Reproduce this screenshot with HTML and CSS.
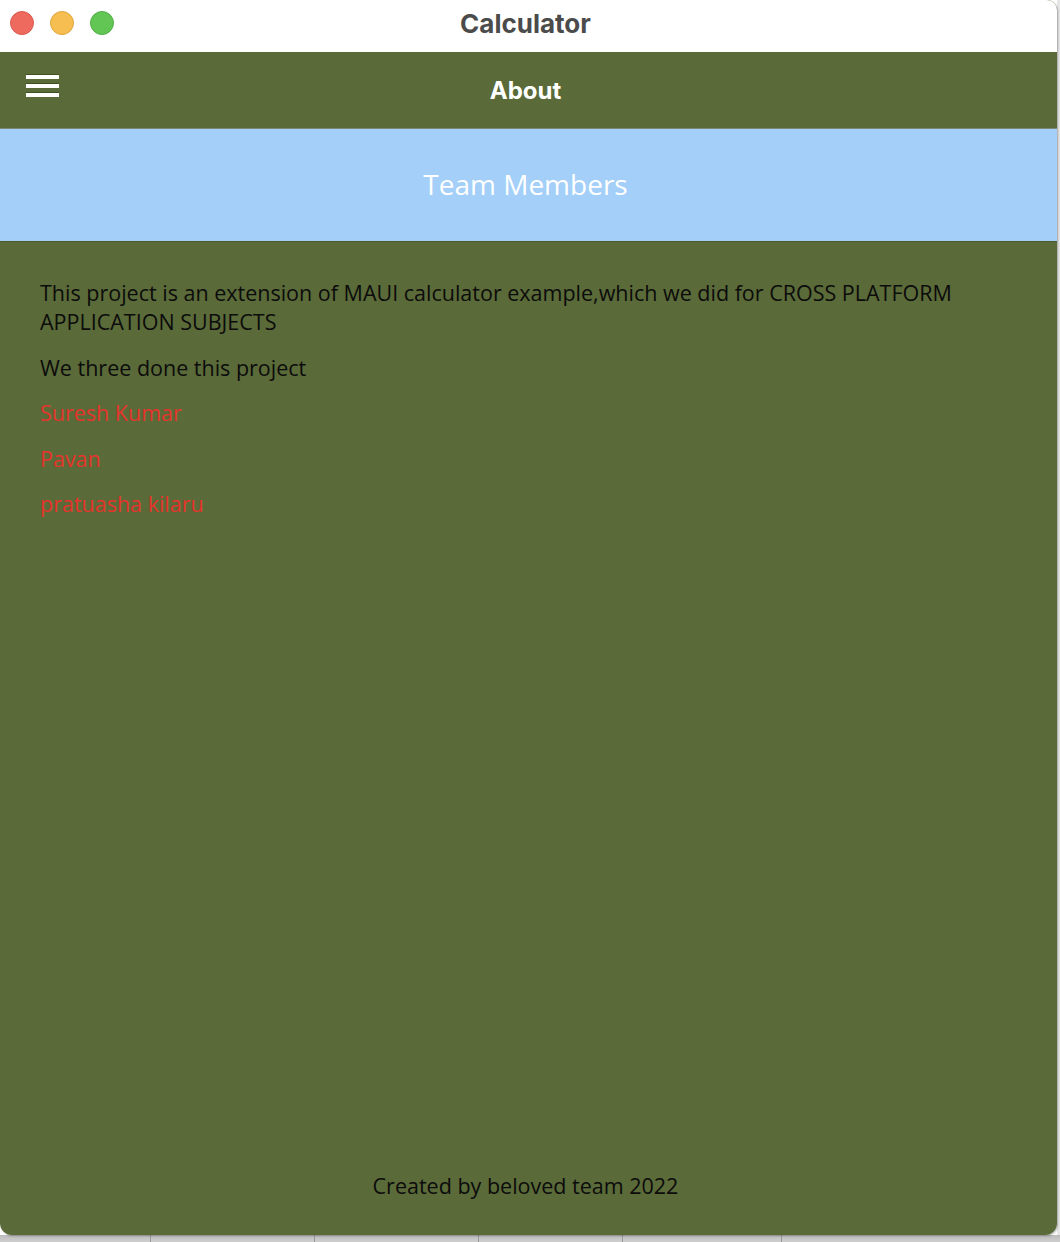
FILE: index.html
```html
<!DOCTYPE html>
<html>
<head>
<meta charset="utf-8">
<link rel="stylesheet" href="styles.css">
</head>
<body>
<div class="desktop">
  <div class="window">
    <div class="titlebar">
      <div class="lights">
        <span class="light red"></span>
        <span class="light yellow"></span>
        <span class="light green"></span>
      </div>
      <div class="title">Calculator</div>
    </div>
    <div class="navbar">
      <div class="burger"><span></span><span></span><span></span></div>
      <div class="navtitle">About</div>
    </div>
    <div class="banner">Team Members</div>
    <div class="content">
      <p class="text">This project is an extension of MAUI calculator example,which we did for CROSS PLATFORM APPLICATION SUBJECTS</p>
      <p class="text">We three done this project</p>
      <p class="text name">Suresh Kumar</p>
      <p class="text name">Pavan</p>
      <p class="text name">pratuasha kilaru</p>
    </div>
    <div class="footer">Created by beloved team 2022</div>
  </div>
  <div class="dock">
    <span class="seg s1"></span><span class="seg s2"></span><span class="seg s3"></span><span class="seg s4"></span><span class="seg s5"></span>
  </div>
</div>
</body>
</html>
```
FILE: styles.css
```css
html, body {
  margin: 0;
  padding: 0;
}
body {
  background: #d0d0d0;
  width: 1060px;
  height: 1242px;
  overflow: hidden;
}
.desktop {
  display: flex;
  flex-direction: column;
  width: 1060px;
  height: 1242px;
  background: linear-gradient(to right, #ffffff 0, #ffffff 1057px, #e6e6e6 1057px);
}
.window {
  width: 1057px;
  height: 1235px;
  display: flex;
  flex-direction: column;
  background: #5a6a38;
  border-radius: 0 10px 12px 12px;
  overflow: hidden;
  box-shadow: 1px 1px 2px rgba(0,0,0,0.3);
  position: relative;
  z-index: 1;
}
.titlebar {
  height: 52px;
  background: #ffffff;
  display: flex;
  align-items: center;
  justify-content: center;
  position: relative;
  flex: none;
}
.lights {
  position: absolute;
  left: 10px;
  top: 11px;
  display: flex;
  gap: 16px;
}
.light {
  width: 24px;
  height: 24px;
  border-radius: 50%;
  box-sizing: border-box;
}
.red { background: #ee6a5f; border: 1px solid #d85a50; }
.yellow { background: #f6be50; border: 1px solid #dea63e; }
.green { background: #62c655; border: 1px solid #52ae45; }
.title {
  font-family: Inter, Roboto, "Liberation Sans", sans-serif;
  font-weight: 700;
  font-size: 26px;
  color: #4b4b4b;
  margin-left: -6px;
  margin-top: -6px;
}
.navbar {
  height: 76px;
  background: #5a6a38;
  border-bottom: 1px solid #7b8a78;
  display: flex;
  align-items: center;
  justify-content: center;
  position: relative;
  flex: none;
}
.burger {
  position: absolute;
  left: 26px;
  top: 23px;
  display: flex;
  flex-direction: column;
  gap: 5px;
}
.burger span {
  display: block;
  width: 33px;
  height: 4px;
  background: #ffffff;
  box-shadow: 0 -1px 0 #3f5020;
}
.navtitle {
  font-family: Inter, Roboto, "Liberation Sans", sans-serif;
  font-weight: 700;
  font-size: 24px;
  color: #ffffff;
  margin-left: -6px;
}
.banner {
  height: 113px;
  background: #a3cff8;
  border-bottom: 1px solid #4c5a2e;
  display: flex;
  align-items: center;
  justify-content: center;
  font-family: "Open Sans", sans-serif;
  font-size: 28px;
  color: #ffffff;
  padding-right: 6px;
  padding-bottom: 2px;
  box-sizing: border-box;
  flex: none;
}
.content {
  flex: 1;
  padding: 36px 40px 0 40px;
  display: flex;
  flex-direction: column;
  gap: 16.6px;
}
.text {
  margin: 0;
  font-family: "Open Sans", sans-serif;
  font-size: 21.5px;
  line-height: 29px;
  color: #0c0c0c;
}
.name {
  color: #e5342c;
}
.footer {
  font-family: "Open Sans", sans-serif;
  font-size: 21.5px;
  line-height: 29px;
  color: #0c0c0c;
  text-align: center;
  padding: 0 6px 35px 0;
  flex: none;
}
.dock {
  flex: 1;
  display: flex;
  background: linear-gradient(to bottom, #bcbcbc, #cfcfcf);
}
.seg {
  border-right: 1px solid #9a9a9a;
}
.s1 { width: 150px; }
.s2 { width: 163px; }
.s3 { width: 163px; }
.s4 { width: 143px; }
.s5 { width: 158px; }
```
